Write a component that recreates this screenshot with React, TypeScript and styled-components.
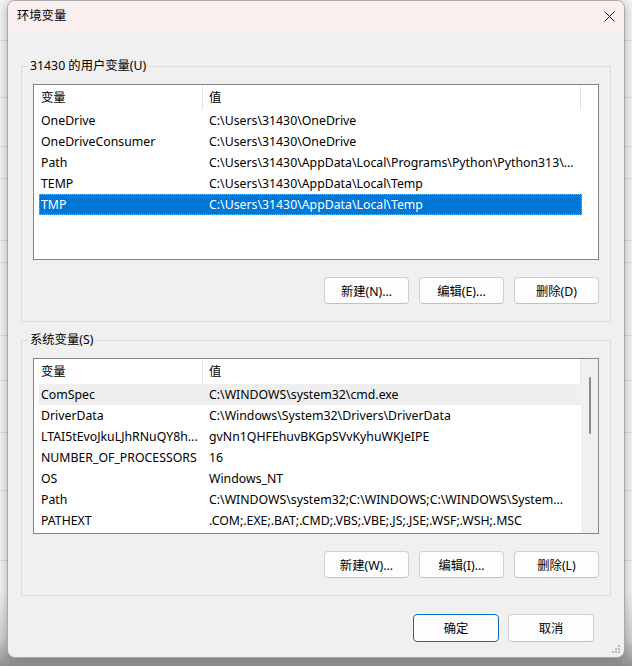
import styled, { createGlobalStyle } from 'styled-components';

const GlobalStyle = createGlobalStyle`
  html, body {
    margin: 0;
    padding: 0;
  }
  body {
    width: 632px;
    height: 666px;
    overflow: hidden;
    font-family: "Noto Sans", "Noto Sans CJK SC", sans-serif;
    font-size: 12.3px;
    color: #000;
  }
  * {
    box-sizing: border-box;
  }
`;

const Desktop = styled.div`
  width: 632px;
  height: 666px;
  padding-left: 7px;
  background:
    linear-gradient(#d9d9d9, #d9d9d9) 0 40px / 100% 1px no-repeat,
    linear-gradient(#d9d9d9, #d9d9d9) 0 97px / 100% 1px no-repeat,
    linear-gradient(#d9d9d9, #d9d9d9) 0 146px / 100% 1px no-repeat,
    linear-gradient(#d9d9d9, #d9d9d9) 0 178px / 100% 1px no-repeat,
    linear-gradient(#d9d9d9, #d9d9d9) 0 240px / 100% 1px no-repeat,
    linear-gradient(#d9d9d9, #d9d9d9) 0 262px / 100% 1px no-repeat,
    linear-gradient(#d9d9d9, #d9d9d9) 0 335px / 100% 1px no-repeat,
    linear-gradient(#d9d9d9, #d9d9d9) 0 380px / 100% 1px no-repeat,
    linear-gradient(#d9d9d9, #d9d9d9) 0 432px / 100% 1px no-repeat,
    linear-gradient(#d9d9d9, #d9d9d9) 0 490px / 100% 1px no-repeat,
    linear-gradient(#d9d9d9, #d9d9d9) 0 560px / 100% 1px no-repeat,
    linear-gradient(to bottom, #f1f1f1 0, #f1f1f1 590px, #cdcdcd 640px, #a3a3a3 658px, #8e8e8e 666px);
`;

const Window = styled.div`
  position: relative;
  width: 618px;
  height: 658px;
  border: 1px solid #a9a9a9;
  border-radius: 8px;
  background: #f0f0f0;
  overflow: hidden;
  display: flex;
  flex-direction: column;
  box-shadow: 0 2px 10px rgba(0, 0, 0, 0.28);
`;

const TitleBar = styled.div`
  height: 30px;
  flex-shrink: 0;
  display: flex;
  align-items: center;
  padding-left: 9px;
  background: #f8efee;
`;

const Title = styled.span`
  line-height: 16px;
`;

const CloseButton = styled.div`
  margin-left: auto;
  width: 30px;
  height: 30px;
  display: flex;
  align-items: center;
  justify-content: center;
`;

const Body = styled.div`
  flex: 1;
  display: flex;
  flex-direction: column;
  padding: 28px 13px 0;
`;

const GroupBox = styled.div<{ $gap?: number }>`
  display: flex;
  flex-direction: column;
  margin-top: ${p => p.$gap ?? 0}px;
`;

const GroupHead = styled.div`
  display: flex;
  height: 14px;

  &::before {
    content: '';
    width: 6px;
    margin-top: 7px;
    border-top: 1px solid #dcdcdc;
    border-left: 1px solid #dcdcdc;
  }

  &::after {
    content: '';
    flex: 1;
    margin-top: 7px;
    border-top: 1px solid #dcdcdc;
    border-right: 1px solid #dcdcdc;
  }
`;

const Legend = styled.span`
  padding: 0 2px;
  line-height: 14px;
  white-space: nowrap;
`;

const GroupInner = styled.div`
  display: flex;
  flex-direction: column;
  border: 1px solid #dcdcdc;
  border-top: none;
  padding: 11px 11px 17px;
`;

const List = styled.div`
  height: 176px;
  display: flex;
  border: 1px solid #868686;
  background: #fff;
`;

const ListContent = styled.div`
  flex: 1;
  display: flex;
  flex-direction: column;
  overflow: hidden;
`;

const Header = styled.div`
  display: flex;
  height: 25px;
  flex-shrink: 0;
`;

const HeaderCell = styled.div<{ $width: number; $pad: number }>`
  width: ${p => p.$width}px;
  height: 24px;
  margin-top: 1px;
  padding-left: ${p => p.$pad}px;
  line-height: 24px;
  border-right: 1px solid #e5e5e5;
  white-space: nowrap;
`;

const Row = styled.div<{ $state?: 'selected' | 'hover' }>`
  display: flex;
  width: 543px;
  height: 21px;
  margin-left: 5px;
  flex-shrink: 0;
  line-height: 21px;
  white-space: nowrap;
  background: ${p => (p.$state === 'selected' ? '#0078d7' : p.$state === 'hover' ? '#efefef' : 'transparent')};
  color: ${p => (p.$state === 'selected' ? '#fff' : '#000')};
  outline: ${p => (p.$state === 'selected' ? '1px dotted #e9a447' : 'none')};
  outline-offset: -1px;
`;

const NameCell = styled.div`
  width: 164px;
  padding-left: 2px;
  overflow: hidden;
`;

const ValueCell = styled.div`
  flex: 1;
  padding-left: 6px;
  overflow: hidden;
`;

const Scrollbar = styled.div`
  width: 17px;
  flex-shrink: 0;
  display: flex;
  justify-content: center;
  padding-top: 18px;
  background: #f0f0f0;
`;

const Thumb = styled.div`
  width: 2px;
  height: 57px;
  border-radius: 1px;
  background: #8a8a8a;
`;

const ButtonRow = styled.div`
  display: flex;
  justify-content: flex-end;
  gap: 10px;
  margin-top: 17px;
`;

const Button = styled.div<{ $primary?: boolean; $width?: number; $height?: number }>`
  width: ${p => p.$width ?? 85}px;
  height: ${p => p.$height ?? 27}px;
  display: flex;
  align-items: center;
  justify-content: center;
  border: 1px solid ${p => (p.$primary ? '#0f6cbd' : '#d0d0d0')};
  border-bottom-color: ${p => (p.$primary ? '#0f6cbd' : '#c2c2c2')};
  border-radius: 4px;
  background: #fdfdfd;
  white-space: nowrap;
`;

const Footer = styled.div`
  display: flex;
  justify-content: flex-end;
  gap: 9px;
  margin-top: 18px;
  padding-right: 17px;
`;

const Grip = styled.svg`
  position: absolute;
  right: 3px;
  bottom: 3px;
`;

type Variable = { name: string; value: string; state?: 'selected' | 'hover' };

const userVars: Variable[] = [
  { name: 'OneDrive', value: String.raw`C:\Users\31430\OneDrive` },
  { name: 'OneDriveConsumer', value: String.raw`C:\Users\31430\OneDrive` },
  { name: 'Path', value: String.raw`C:\Users\31430\AppData\Local\Programs\Python\Python313\...` },
  { name: 'TEMP', value: String.raw`C:\Users\31430\AppData\Local\Temp` },
  { name: 'TMP', value: String.raw`C:\Users\31430\AppData\Local\Temp`, state: 'selected' },
];

const systemVars: Variable[] = [
  { name: 'ComSpec', value: String.raw`C:\WINDOWS\system32\cmd.exe`, state: 'hover' },
  { name: 'DriverData', value: String.raw`C:\Windows\System32\Drivers\DriverData` },
  { name: 'LTAI5tEvoJkuLJhRNuQY8h...', value: 'gvNn1QHFEhuvBKGpSVvKyhuWKJeIPE' },
  { name: 'NUMBER_OF_PROCESSORS', value: '16' },
  { name: 'OS', value: 'Windows_NT' },
  { name: 'Path', value: String.raw`C:\WINDOWS\system32;C:\WINDOWS;C:\WINDOWS\System...` },
  { name: 'PATHEXT', value: '.COM;.EXE;.BAT;.CMD;.VBS;.VBE;.JS;.JSE;.WSF;.WSH;.MSC' },
];

const VariableList = ({ rows, scroll }: { rows: Variable[]; scroll?: boolean }) => (
  <List>
    <ListContent>
      <Header>
        <HeaderCell $width={169} $pad={7}>变量</HeaderCell>
        <HeaderCell $width={378} $pad={6}>值</HeaderCell>
      </Header>
      {rows.map(r => (
        <Row key={r.name} $state={r.state}>
          <NameCell>{r.name}</NameCell>
          <ValueCell>{r.value}</ValueCell>
        </Row>
      ))}
    </ListContent>
    {scroll && (
      <Scrollbar>
        <Thumb />
      </Scrollbar>
    )}
  </List>
);

const App = () => (
  <>
    <GlobalStyle />
    <Desktop>
      <Window>
        <TitleBar>
          <Title>环境变量</Title>
          <CloseButton>
            <svg width="11" height="11" viewBox="0 0 11 11">
              <path d="M0.5 0.5 L10.5 10.5 M10.5 0.5 L0.5 10.5" stroke="#1b1b1b" strokeWidth="1" fill="none" />
            </svg>
          </CloseButton>
        </TitleBar>
        <Body>
          <GroupBox>
            <GroupHead>
              <Legend>31430 的用户变量(U)</Legend>
            </GroupHead>
            <GroupInner>
              <VariableList rows={userVars} />
              <ButtonRow>
                <Button>新建(N)...</Button>
                <Button>编辑(E)...</Button>
                <Button>删除(D)</Button>
              </ButtonRow>
            </GroupInner>
          </GroupBox>
          <GroupBox $gap={11}>
            <GroupHead>
              <Legend>系统变量(S)</Legend>
            </GroupHead>
            <GroupInner>
              <VariableList rows={systemVars} scroll />
              <ButtonRow>
                <Button>新建(W)...</Button>
                <Button>编辑(I)...</Button>
                <Button>删除(L)</Button>
              </ButtonRow>
            </GroupInner>
          </GroupBox>
          <Footer>
            <Button $primary $width={86} $height={28}>确定</Button>
            <Button $width={86} $height={28}>取消</Button>
          </Footer>
        </Body>
        <Grip width="10" height="10" viewBox="0 0 10 10">
          {[[8, 2], [8, 5], [5, 5], [8, 8], [5, 8], [2, 8]].map(([x, y]) => (
            <rect key={`${x}-${y}`} x={x - 1} y={y - 1} width="2" height="2" fill="#b8b8b8" />
          ))}
        </Grip>
      </Window>
    </Desktop>
  </>
);

export default App;
